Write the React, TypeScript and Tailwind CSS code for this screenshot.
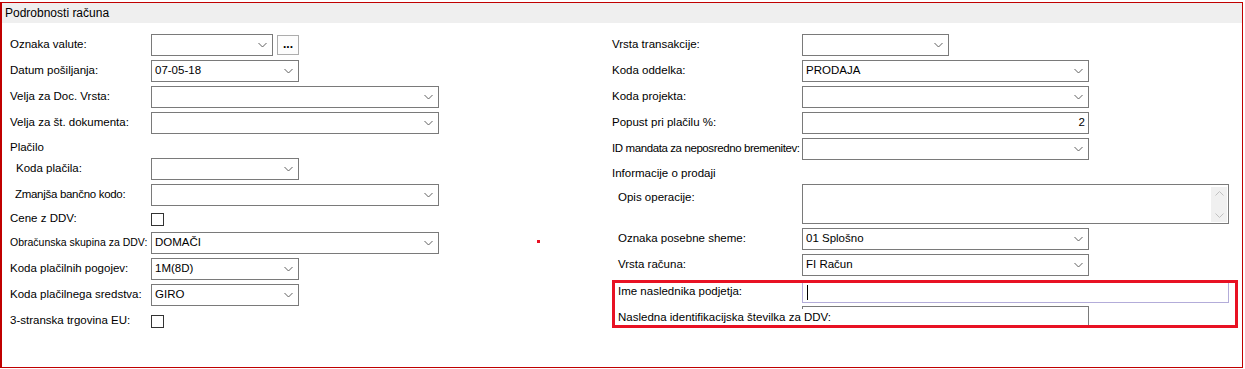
import React from 'react';

const Chevron = () => (
  <svg width="9" height="5" viewBox="0 0 9 5" className="absolute right-[5px] top-1/2 -translate-y-1/2">
    <polyline points="0.5,0.5 4.5,4.5 8.5,0.5" fill="none" stroke="#606060" strokeWidth="1" />
  </svg>
);

const Combo = ({ value, className }: { value?: string; className: string }) => (
  <div className={`relative h-[22px] border border-[#7a7a7a] bg-white flex items-center pl-[3px] shrink-0 ${className}`}>
    <span className="leading-none">{value}</span>
    <Chevron />
  </div>
);

const CheckBox = () => <div className="w-[13px] h-[13px] border border-[#333333] bg-white" />;

export default function App() {
  return (
    <div className="w-[1245px] h-[369px] bg-white pt-[2px] text-[11.5px] text-black" style={{ fontFamily: '"Liberation Sans", Arial, sans-serif' }}>
      <div className="relative w-[1243px] h-[366px] border border-[#c00000] border-l-2">
        {/* Header */}
        <div className="h-[20px] bg-[#efefef] pl-[3px] flex items-center text-[12px]">Podrobnosti računa</div>

        <div className="flex">
          {/* Left column */}
          <div className="w-[602px] ml-[8px] flex flex-col">
            <div className="flex items-center h-[22px] mt-[11px]">
              <span className="w-[141px]">Oznaka valute:</span>
              <Combo className="w-[122px]" />
              <div className="ml-[4px] w-[22px] h-[20px] border border-[#adadad] bg-[#fdfdfd] flex items-center justify-center font-bold text-[12px] leading-none pb-[2px]">...</div>
            </div>
            <div className="flex items-center h-[22px] mt-[4px]">
              <span className="w-[141px]">Datum pošiljanja:</span>
              <Combo className="w-[148px]" value="07-05-18" />
            </div>
            <div className="flex items-center h-[22px] mt-[4px]">
              <span className="w-[141px]">Velja za Doc. Vrsta:</span>
              <Combo className="w-[288px]" />
            </div>
            <div className="flex items-center h-[22px] mt-[4px]">
              <span className="w-[141px]">Velja za št. dokumenta:</span>
              <Combo className="w-[288px]" />
            </div>
            <div className="flex items-center h-[20px] mt-[4px]">Plačilo</div>
            <div className="flex items-center h-[22px]">
              <span className="w-[141px] pl-[6px]">Koda plačila:</span>
              <Combo className="w-[148px]" />
            </div>
            <div className="flex items-center h-[22px] mt-[4px]">
              <span className="w-[141px] pl-[5px] tracking-[-0.3px]">Zmanjša bančno kodo:</span>
              <Combo className="w-[288px]" />
            </div>
            <div className="flex items-center h-[18px] mt-[4px]">
              <span className="w-[141px]">Cene z DDV:</span>
              <CheckBox />
            </div>
            <div className="flex items-center h-[22px] mt-[4px]">
              <span className="w-[141px] text-[10.5px]">Obračunska skupina za DDV:</span>
              <Combo className="w-[288px]" value="DOMAČI" />
            </div>
            <div className="flex items-center h-[22px] mt-[4px]">
              <span className="w-[141px]">Koda plačilnih pogojev:</span>
              <Combo className="w-[148px]" value="1M(8D)" />
            </div>
            <div className="flex items-center h-[22px] mt-[4px]">
              <span className="w-[141px]">Koda plačilnega sredstva:</span>
              <Combo className="w-[148px]" value="GIRO" />
            </div>
            <div className="flex items-center h-[22px] mt-[4px]">
              <span className="w-[141px]">3-stranska trgovina EU:</span>
              <CheckBox />
            </div>
          </div>

          {/* Right column */}
          <div className="flex flex-col">
            <div className="flex items-center h-[22px] mt-[11px]">
              <span className="w-[190px]">Vrsta transakcije:</span>
              <Combo className="w-[147px]" />
            </div>
            <div className="flex items-center h-[22px] mt-[4px]">
              <span className="w-[190px]">Koda oddelka:</span>
              <Combo className="w-[287px]" value="PRODAJA" />
            </div>
            <div className="flex items-center h-[22px] mt-[4px]">
              <span className="w-[190px]">Koda projekta:</span>
              <Combo className="w-[287px]" />
            </div>
            <div className="flex items-center h-[22px] mt-[4px]">
              <span className="w-[190px]">Popust pri plačilu %:</span>
              <div className="w-[287px] h-[22px] border border-[#7a7a7a] flex items-center justify-end pr-[3px]">2</div>
            </div>
            <div className="flex items-center h-[22px] mt-[4px]">
              <span className="w-[190px] whitespace-nowrap tracking-[-0.4px]">ID mandata za neposredno bremenitev:</span>
              <Combo className="w-[287px]" />
            </div>
            <div className="flex items-center h-[20px] mt-[4px]">Informacije o prodaji</div>
            <div className="flex items-start h-[40px]">
              <span className="w-[190px] pl-[6px] pt-[5px]">Opis operacije:</span>
              <div className="relative w-[427px] h-[40px] border border-[#7a7a7a] bg-white">
                <div className="absolute right-[1px] top-[2px] bottom-[1px] w-[16px] bg-[#f0f0f0] flex flex-col items-center justify-between py-[4px]">
                  <svg width="9" height="5" viewBox="0 0 9 5">
                    <polyline points="0.5,4.5 4.5,0.5 8.5,4.5" fill="none" stroke="#c0c0c0" strokeWidth="1" />
                  </svg>
                  <svg width="9" height="5" viewBox="0 0 9 5">
                    <polyline points="0.5,0.5 4.5,4.5 8.5,0.5" fill="none" stroke="#c0c0c0" strokeWidth="1" />
                  </svg>
                </div>
              </div>
            </div>
            <div className="flex items-center h-[22px] mt-[4px]">
              <span className="w-[190px] pl-[6px]">Oznaka posebne sheme:</span>
              <Combo className="w-[287px]" value="01 Splošno" />
            </div>
            <div className="flex items-center h-[22px] mt-[4px]">
              <span className="w-[190px] pl-[6px]">Vrsta računa:</span>
              <Combo className="w-[287px]" value="FI Račun" />
            </div>
            <div className="flex items-center h-[22px] mt-[5px]">
              <span className="w-[190px] pl-[6px]">Ime naslednika podjetja:</span>
              <div className="w-[427px] h-[22px] border border-[#b3acd9] flex items-center pl-[4px]">
                <div className="w-[1px] h-[15px] bg-black" />
              </div>
            </div>
            <div className="flex items-center h-[22px] mt-[3px]">
              <div className="w-[190px] pl-[6px] relative z-10 h-[22px] flex items-center">
                <span className="whitespace-nowrap bg-white leading-[16px]">Nasledna identifikacijska številka za DDV:</span>
              </div>
              <div className="w-[287px] h-[22px] border border-[#7a7a7a]" />
            </div>
          </div>
        </div>

        {/* Annotation overlays */}
        <div className="absolute left-[535px] top-[237px] w-[3px] h-[3px] bg-[#e81123]" />
        <div className="absolute left-[610px] top-[277px] w-[626px] h-[48px] border-[3px] border-[#e81123]" />
      </div>
    </div>
  );
}
